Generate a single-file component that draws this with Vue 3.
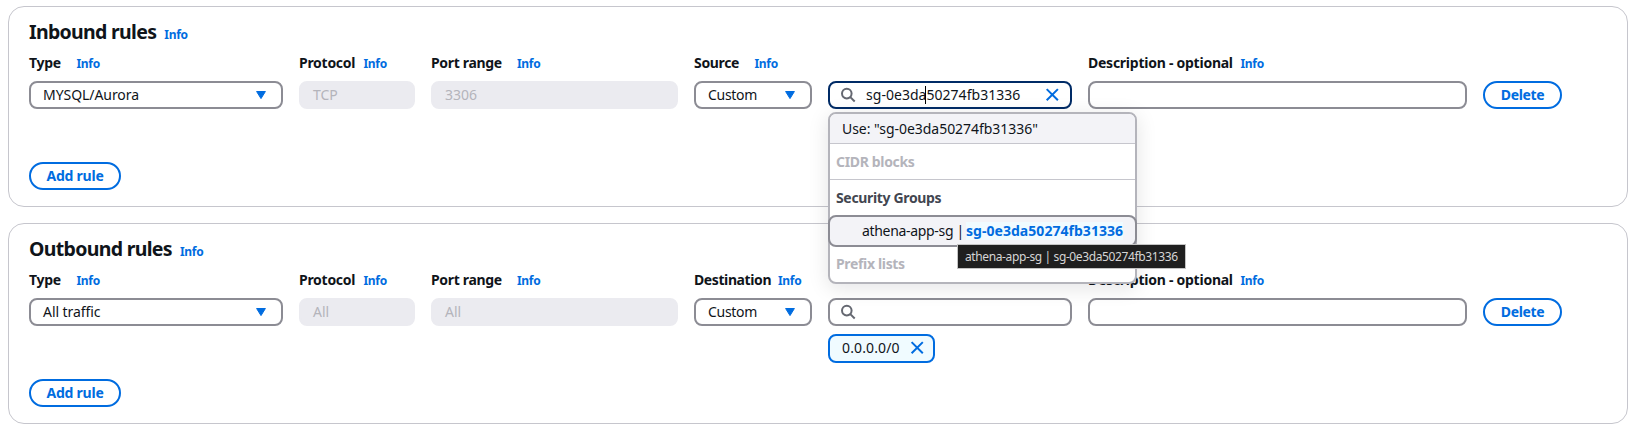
<script setup>
const cards = [
  {
    title: 'Inbound rules',
    type: 'MYSQL/Aurora',
    protocol: 'TCP',
    port: '3306',
    target: 'Source',
    open: true,
  },
  {
    title: 'Outbound rules',
    type: 'All traffic',
    protocol: 'All',
    port: 'All',
    target: 'Destination',
    open: false,
    token: '0.0.0.0/0',
  },
]
</script>

<template>
  <main class="page">
    <section v-for="card in cards" :key="card.title" class="card">
      <header class="head">
        <h2>{{ card.title }}</h2>
        <a class="info">Info</a>
      </header>

      <div class="grid labels">
        <div class="label"><b class="l-type">Type</b><a class="info">Info</a></div>
        <div class="label"><b class="l-protocol">Protocol</b><a class="info">Info</a></div>
        <div class="label"><b class="l-port">Port range</b><a class="info">Info</a></div>
        <div class="label">
          <b :class="card.open ? 'l-source' : 'l-destination'">{{ card.target }}</b><a class="info">Info</a>
        </div>
        <div></div>
        <div class="label"><b class="l-description">Description - optional</b><a class="info">Info</a></div>
      </div>

      <div class="grid controls">
        <div class="field select">
          <span>{{ card.type }}</span>
          <svg class="caret" viewBox="0 0 16 16"><path d="M3.6 4.5h8.8L8 11.6z" /></svg>
        </div>
        <div class="field disabled">{{ card.protocol }}</div>
        <div class="field disabled">{{ card.port }}</div>
        <div class="field select">
          <span class="custom">Custom</span>
          <svg class="caret" viewBox="0 0 16 16"><path d="M3.6 4.5h8.8L8 11.6z" /></svg>
        </div>

        <div class="search-cell">
          <div class="field search" :class="{ focused: card.open }">
            <svg class="glass" viewBox="0 0 16 16">
              <circle cx="6.8" cy="6.6" r="4.8" />
              <path d="M10.3 10.1l4.4 4.4" />
            </svg>
            <template v-if="card.open">
              <span class="query">sg-0e3da<i class="cursor"></i>50274fb31336</span>
              <svg class="cross" viewBox="0 0 16 16"><path d="M2.7 2.1l11.2 11.2M13.9 2.1L2.7 13.3" /></svg>
            </template>
          </div>

          <div v-if="card.token" class="token">
            <span>{{ card.token }}</span>
            <svg class="cross" viewBox="0 0 16 16"><path d="M2.6 2.1l11.2 11.2M13.8 2.1L2.6 13.3" /></svg>
          </div>

          <div v-if="card.open" class="dropdown">
            <div class="use">Use: "sg-0e3da50274fb31336"</div>
            <div class="group muted ruled">CIDR blocks</div>
            <div class="group parent">Security Groups</div>
            <div class="option"><span class="name">athena-app-sg |</span><mark>sg-0e3da50274fb31336</mark></div>
            <div class="group muted last">Prefix lists</div>
            <div class="tooltip">athena-app-sg | sg-0e3da50274fb31336</div>
          </div>
        </div>

        <div class="field"></div>
        <button class="btn delete">Delete</button>
      </div>

      <button class="btn add">Add rule</button>
    </section>
  </main>
</template>

<style>
body {
  background: #fff;
}
</style>

<style scoped>
* {
  box-sizing: border-box;
}
.page {
  width: 1628px;
  padding: 6px 0 4px 8px;
  display: flex;
  flex-direction: column;
  gap: 16px;
  font: 14px/20px "Noto Sans", "Open Sans", sans-serif;
  color: #0f141a;
  white-space: nowrap;
}
.card {
  height: 201px;
  border: 1px solid #c6c6cd;
  border-radius: 16px;
  padding: 13px 20px 0;
}
.head {
  display: flex;
  align-items: baseline;
  gap: 8px;
  height: 24px;
}
h2 {
  margin: 0;
  font-size: 19.5px;
  line-height: 24px;
  font-weight: 700;
  letter-spacing: -0.68px;
}
.info {
  font-size: 12px;
  font-weight: 700;
  letter-spacing: -0.3px;
  color: #006ce0;
}
.grid {
  display: grid;
  grid-template-columns: 254px 116px 247px 118px 244px 379px 79px;
  column-gap: 16px;
}
.labels {
  margin-top: 9px;
}
.label {
  display: flex;
  align-items: baseline;
  height: 20px;
}
.label b {
  font-weight: 700;
  letter-spacing: -0.33px;
}
.l-type {
  width: 47.5px;
}
.label .l-protocol {
  width: 64.5px;
  letter-spacing: -0.28px;
}
.l-port {
  width: 86px;
}
.l-source {
  width: 60.5px;
}
.label .l-destination {
  width: 84px;
  letter-spacing: -0.4px;
}
.label .l-description {
  width: 152.5px;
  letter-spacing: -0.25px;
}
.controls {
  margin-top: 8px;
  min-height: 65px;
  align-items: start;
}
.field {
  height: 28px;
  border: 2px solid #8c8c94;
  border-radius: 8px;
  background: #fff;
  display: flex;
  align-items: center;
}
.select {
  justify-content: space-between;
  padding: 0 12px 0 12px;
  letter-spacing: -0.06px;
}
.custom {
  letter-spacing: -0.3px;
}
.disabled {
  background: #ebebf0;
  border-color: #ebebf0;
  color: #b4b4bb;
  padding-left: 12px;
}
svg {
  display: block;
  flex: none;
  width: 16px;
  height: 16px;
  fill: none;
  stroke-width: 2;
}
.caret {
  fill: #006ce0;
  stroke: #006ce0;
  stroke-width: 1;
  stroke-linejoin: round;
}
.glass {
  stroke: #656871;
}
.cross {
  stroke: #006ce0;
}
.search-cell {
  position: relative;
}
.search {
  padding: 0 10px;
}
.focused {
  border-color: #002b66;
}
.query {
  flex: 1;
  margin-left: 10px;
  letter-spacing: 0.03px;
}
.cursor {
  display: inline-block;
  width: 1px;
  height: 18px;
  margin-left: -1px;
  vertical-align: -4px;
  background: #000;
}
.token {
  width: 107px;
  height: 29px;
  margin-top: 8px;
  padding: 2px 8px 0 12px;
  border: 2px solid #006ce0;
  border-radius: 8px;
  background: #f0fbff;
  display: flex;
  justify-content: space-between;
  letter-spacing: 0.12px;
}
.token .cross {
  margin-top: 2px;
}
.dropdown {
  position: absolute;
  z-index: 10;
  top: 31px;
  left: 0;
  width: 309px;
  height: 172px;
  border: 2px solid #b4b4bb;
  border-radius: 8px;
  background: #fff;
  box-shadow: 0 4px 20px 1px rgba(0, 7, 22, 0.1);
}
.use {
  height: 30px;
  padding: 5px 0 0 12px;
  border-bottom: 1px solid #c6c6cd;
  border-radius: 6px 6px 0 0;
  background: #f3f3f7;
  letter-spacing: -0.04px;
}
.group {
  height: 35px;
  padding: 8px 0 0 6px;
  font-weight: 700;
  letter-spacing: -0.34px;
}
.ruled {
  height: 36px;
  border-bottom: 1px solid #c6c6cd;
}
.muted {
  color: #b4b4bb;
}
.parent {
  color: #424650;
}
.last {
  padding-top: 7px;
}
.option {
  height: 32px;
  margin: 0 -2px;
  padding: 4px 0 0 32px;
  border: 2px solid #8c8c94;
  border-radius: 8px;
  background: #f3f3f7;
  display: flex;
}
.name {
  width: 104px;
  letter-spacing: -0.32px;
}
mark {
  height: 18px;
  margin-top: 1px;
  line-height: 18px;
  background: #f0fbff;
  color: #006ce0;
  font-weight: 700;
  letter-spacing: 0.04px;
}
.tooltip {
  position: absolute;
  top: 130px;
  left: 127px;
  width: 229px;
  height: 25px;
  padding-left: 7px;
  border: 1px solid #c4c4c4;
  background: #1f1f1f;
  color: #d6d6d6;
  font-size: 12px;
  line-height: 23px;
  letter-spacing: -0.38px;
}
.btn {
  display: block;
  height: 28px;
  padding: 0;
  border: 2px solid #006ce0;
  border-radius: 14px;
  background: #fff;
  color: #006ce0;
  font: 700 14px/24px "Noto Sans", "Open Sans", sans-serif;
}
.delete {
  width: 79px;
  letter-spacing: -0.38px;
}
.add {
  width: 92px;
  margin-top: 16px;
  letter-spacing: -0.23px;
}
</style>
